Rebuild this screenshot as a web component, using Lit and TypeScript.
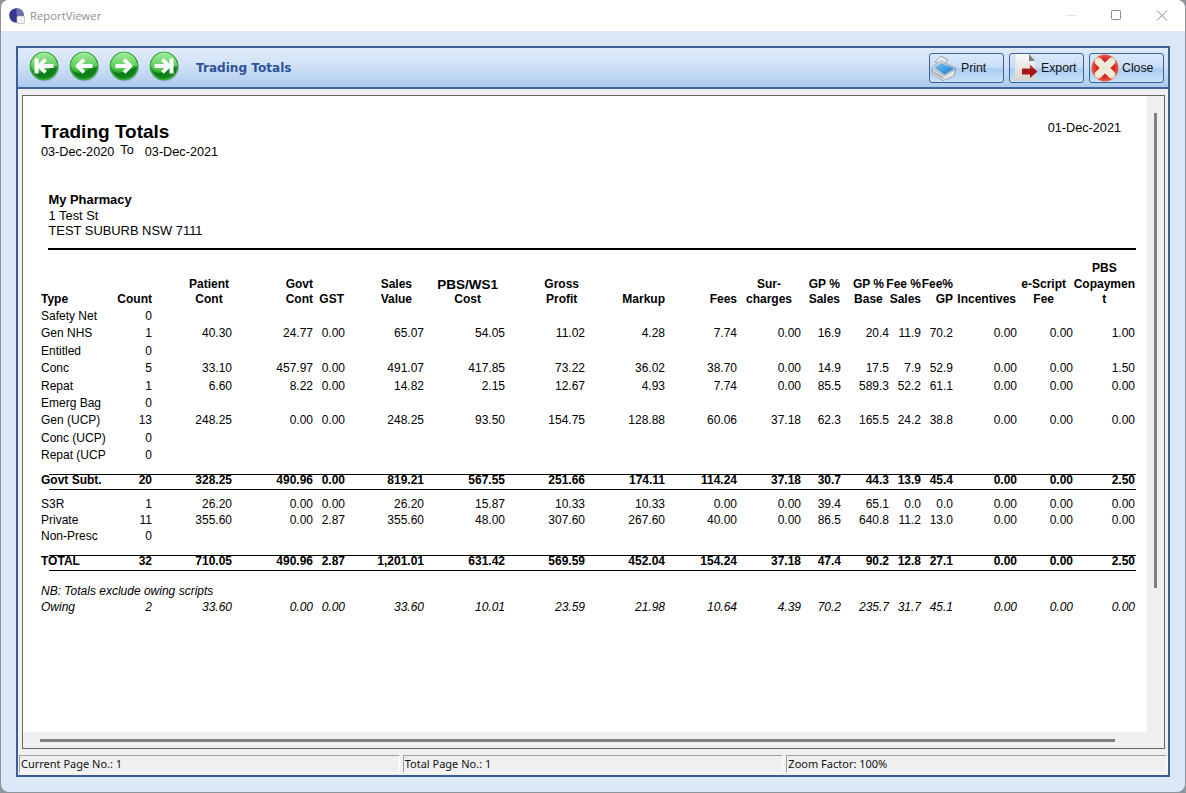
import { LitElement, html, css, svg } from "lit";
import { customElement } from "lit/decorators.js";

interface Head { lines: string[]; mr: number; align?: string }
const COLS = [70, 41, 80, 81, 32, 79, 81, 80, 80, 72, 64, 40, 48, 32, 32, 64, 56, 62];
const HEADS: Head[] = [
  { lines: ["Type"], mr: 0, align: "left" },
  { lines: ["Count"], mr: 0 },
  { lines: ["Patient", "Cont"], mr: 3, align: "center" },
  { lines: ["Govt", "Cont"], mr: 0 },
  { lines: ["GST"], mr: 1 },
  { lines: ["Sales", "Value"], mr: 12, align: "center" },
  { lines: ["PBS/WS1", "Cost"], mr: 7, align: "center" },
  { lines: ["Gross", "Profit"], mr: 6, align: "center" },
  { lines: ["Markup"], mr: 0 },
  { lines: ["Fees"], mr: 0 },
  { lines: ["Sur-", "charges"], mr: 9, align: "center" },
  { lines: ["GP %", "Sales"], mr: 1, align: "center" },
  { lines: ["GP %", "Base"], mr: 5, align: "center" },
  { lines: ["Fee %", "Sales"], mr: 0 },
  { lines: ["Fee%", "GP"], mr: 0 },
  { lines: ["Incentives"], mr: 1 },
  { lines: ["e-Script", "Fee"], mr: 7, align: "center" },
  { lines: ["PBS", "Copaymen", "t"], mr: 0, align: "center" },
];
const row = (s: string) => s.split("|");
const GROUP_A = [
  "Safety Net|0",
  "Gen NHS|1|40.30|24.77|0.00|65.07|54.05|11.02|4.28|7.74|0.00|16.9|20.4|11.9|70.2|0.00|0.00|1.00",
  "Entitled|0",
  "Conc|5|33.10|457.97|0.00|491.07|417.85|73.22|36.02|38.70|0.00|14.9|17.5|7.9|52.9|0.00|0.00|1.50",
  "Repat|1|6.60|8.22|0.00|14.82|2.15|12.67|4.93|7.74|0.00|85.5|589.3|52.2|61.1|0.00|0.00|0.00",
  "Emerg Bag|0",
  "Gen (UCP)|13|248.25|0.00|0.00|248.25|93.50|154.75|128.88|60.06|37.18|62.3|165.5|24.2|38.8|0.00|0.00|0.00",
  "Conc (UCP)|0",
  "Repat (UCP|0",
].map(row);
const SUBT = row("Govt Subt.|20|328.25|490.96|0.00|819.21|567.55|251.66|174.11|114.24|37.18|30.7|44.3|13.9|45.4|0.00|0.00|2.50");
const GROUP_B = [
  "S3R|1|26.20|0.00|0.00|26.20|15.87|10.33|10.33|0.00|0.00|39.4|65.1|0.0|0.0|0.00|0.00|0.00",
  "Private|11|355.60|0.00|2.87|355.60|48.00|307.60|267.60|40.00|0.00|86.5|640.8|11.2|13.0|0.00|0.00|0.00",
  "Non-Presc|0",
].map(row);
const TOTAL = row("TOTAL|32|710.05|490.96|2.87|1,201.01|631.42|569.59|452.04|154.24|37.18|47.4|90.2|12.8|27.1|0.00|0.00|2.50");
const OWING = row("Owing|2|33.60|0.00|0.00|33.60|10.01|23.59|21.98|10.64|4.39|70.2|235.7|31.7|45.1|0.00|0.00|0.00");
const GRID = COLS.map((c) => c + "px").join(" ");

const navIcon = (id: string, arrow: unknown) => html`<svg class="nav" width="32" height="32" viewBox="0 0 32 32">
  <defs>
    <linearGradient id="g${id}" x1="0" y1="0" x2="0" y2="1">
      <stop offset="0" stop-color="#3fbb3a"/><stop offset=".5" stop-color="#2aa82a"/><stop offset="1" stop-color="#45c040"/>
    </linearGradient>
    <linearGradient id="h${id}" x1="0" y1="0" x2="0" y2="1">
      <stop offset="0" stop-color="#a5eb9e"/><stop offset="1" stop-color="#4cc546"/>
    </linearGradient>
    <linearGradient id="d${id}" x1="0" y1="0" x2="1" y2="1">
      <stop offset="0" stop-color="#0a6d12"/><stop offset=".7" stop-color="#0f8318"/><stop offset="1" stop-color="#35b232"/>
    </linearGradient>
  </defs>
  <circle cx="16.500" cy="17" r="14.400" fill="#5f7f8f" opacity=".3"/>
  <circle cx="16" cy="16" r="14" fill="url(#g${id})" stroke="#1c8a20" stroke-width=".7"/>
  <path d="M2.600 16.500C2.600 9 8.500 2.500 16 2.500S29.400 9 29.400 16.500C25 14.500 21 18 15 20 10 21.500 5 20 2.600 16.500Z" fill="url(#h${id})"/>
  <path d="M3.800 20C7 23 11 23.500 16 21.500S25 17 29 18C28 24.500 22.500 28.800 16 28.800 10.500 28.800 6 25 3.800 20Z" fill="url(#d${id})"/>
  <g fill="none" stroke="#fff" stroke-width="3.800" stroke-linejoin="round">${arrow}</g>
</svg>`;
const arrFirst = svg`<path d="M8.500 8.500v15" stroke-width="4"/><path d="M17.500 9.500L11 16l6.500 6.500M12 16h13.500"/>`;
const arrPrev = svg`<path d="M16 9.500L9.500 16l6.500 6.500M10.500 16h14"/>`;
const arrNext = svg`<path d="M16 9.500l6.500 6.500-6.500 6.500M21.500 16h-14"/>`;
const arrLast = svg`<path d="M23.500 8.500v15" stroke-width="4"/><path d="M14.500 9.500L21 16l-6.500 6.500M20 16H6.500"/>`;

const printIcon = html`<svg width="26" height="26" viewBox="0 0 26 26">
  <defs>
    <linearGradient id="pb" x1="0" y1="0" x2="1" y2="1"><stop offset="0" stop-color="#eceef1"/><stop offset="1" stop-color="#9aa3ae"/></linearGradient>
    <linearGradient id="pt" x1="0" y1="0" x2="1" y2="1"><stop offset="0" stop-color="#7fc8f5"/><stop offset="1" stop-color="#1477cf"/></linearGradient>
  </defs>
  <path d="M4 7L10 1l7 4-5 5z" fill="#e9ebee" stroke="#858e99" stroke-width=".8"/>
  <path d="M1 12L10 6l15 7-2 8-11 4.500L2 20z" fill="url(#pb)" stroke="#7f8995" stroke-width=".6"/>
  <path d="M3 12.500L10.500 8 23 13.500 13.500 19.500z" fill="url(#pt)"/>
  <path d="M2 14.500l11.500 6.500 10.500-6.500-1 6.500L12 25.500 2 20z" fill="#e4e7ea" stroke="#8a94a0" stroke-width=".5"/>
  <path d="M3 16.500l9.500 5.500v2.500L3 19z" fill="#aab2bc"/>
</svg>`;
const exportIcon = html`<svg width="26" height="30" viewBox="0 0 26 30">
  <defs><linearGradient id="pe" x1="0" y1="0" x2="0" y2="1"><stop offset="0" stop-color="#fbfbfb"/><stop offset="1" stop-color="#d4d3cc"/></linearGradient></defs>
  <path d="M4 1h13l6 7v20H2z" fill="url(#pe)"/>
  <path d="M17 1l6 7h-6z" fill="#7f7f7f"/>
  <path d="M10 16h8v-4l7.500 6.500L18 25v-3.500h-8z" fill="#a8151b"/>
  <path d="M10 16h8v-4l4 3.400H10z" fill="#c9252b"/>
</svg>`;
const closeIcon = html`<svg width="28" height="28" viewBox="0 0 28 28">
  <defs><radialGradient id="rc" cx="50%" cy="50%" r="55%"><stop offset="0" stop-color="#b01818"/><stop offset=".6" stop-color="#d92a22"/><stop offset="1" stop-color="#ee6a4e"/></radialGradient></defs>
  <circle cx="14" cy="14" r="13.400" fill="url(#rc)"/>
  <path d="M7.500 7.500l13 13M20.500 7.500l-13 13" stroke="#f0ebd8" stroke-width="7.500" stroke-linecap="round" fill="none"/>
</svg>`;

@customElement("app-root")
export class AppRoot extends LitElement {
  static styles = css`
    :host { display: block; width: 1186px; height: 793px; background: #8d949c; font-family: "Liberation Sans", Arial, sans-serif; overflow: hidden; }
    .win { height: 792px; width: 1184px; margin-left: 1px; display: flex; flex-direction: column; border-radius: 8px; overflow: hidden; background: #dce7f7; }
    .title { height: 31px; flex: none; background: #fff; display: flex; align-items: center; padding-left: 8px; color: #8f8f8f; font: 11.300px "Open Sans", sans-serif; }
    .title .name { margin-left: 5px; }
    .wc { margin-left: auto; display: flex; align-items: center; }
    .wc svg { display: block; }
    .body { flex: 1; min-height: 0; padding: 15px; display: flex; }
    .frame { flex: 1; border: 2px solid #3c6096; display: flex; flex-direction: column; background: #f0f0f0; min-width: 0; }
    .bar { height: 41px; flex: none; box-sizing: border-box; border-bottom: 2px solid #3f659c; background: linear-gradient(#dfeafb 0%, #d6e4f8 35%, #adcbed 100%); display: flex; align-items: center; padding: 0 4px 0 10px; }
    .nav { display: block; margin: 0 8px 3px 0; }
    .bar .nav:nth-child(4) { margin-right: 0; }
    .heading { margin-left: 16px; font: bold 12.100px "DejaVu Sans", sans-serif; color: #2e5399; }
    .btns { margin-left: auto; display: flex; gap: 5px; }
    .btn { width: 75px; height: 30px; box-sizing: border-box; border: 1px solid #3d6496; border-radius: 3px; background: linear-gradient(#dbe9fb 0%, #c9def7 45%, #a9cdf3 55%, #cbe2fb 100%); display: flex; align-items: center; font-size: 12.300px; color: #111; padding-left: 1px; gap: 4px; }
    .btn.e { padding-left: 2px; gap: 3px; }
    .btn.x { padding-left: 1px; gap: 3px; }
    .main { flex: 1; min-height: 0; padding: 6px 3px 6px 4px; display: flex; }
    .report { flex: 1; border: 1px solid #666; display: flex; flex-direction: column; min-width: 0; }
    .upper { flex: 1; display: flex; min-height: 0; }
    .page { flex: 1; background: #fff; padding: 0 11px 0 18px; box-sizing: border-box; color: #000; font-size: 12px; min-width: 0; overflow: hidden; }
    .vs { width: 17px; flex: none; display: flex; justify-content: center; padding-top: 17px; box-sizing: border-box; }
    .vs i { display: block; width: 3px; height: 475px; background: #808080; }
    .hs { height: 16px; flex: none; display: flex; align-items: center; padding-left: 17px; }
    .hs i { display: block; width: 1075px; height: 3px; background: #808080; }
    .head { display: flex; justify-content: space-between; padding-top: 25px; font-size: 12.700px; }
    h1 { margin: 0; font-size: 19px; font-weight: bold; line-height: 22px; }
    .range { display: flex; line-height: 15px; margin-top: 2px; }
    .range .to { margin: -2px 11px 0 6px; }
    .date { margin: 0 15px 0 0; line-height: 15px; }
    .addr { margin: 32px 0 0 7.500px; line-height: 15.500px; font-size: 12.900px; }
    .addr b { display: block; }
    .rule { height: 2px; background: #000; margin: 9px 0 11px 7px; }
    .grid { display: grid; position: relative; }
    .hrow { height: 47px; margin-bottom: .5px; align-items: end; font-weight: bold; }
    .hc { display: flex; justify-content: flex-end; min-width: 0; line-height: 15.500px; }
    .hc.left { justify-content: flex-start; }
    .hc span { white-space: nowrap; display: block; }
    .hc span div.big { font-size: 13.500px; }
    .a { height: 17.400px; line-height: 17.400px; }
    .s { height: 16px; line-height: 16px; }
    .c { text-align: right; white-space: nowrap; min-width: 0; }
    .c:first-child { text-align: left; }
    .tot { font-weight: bold; }
    .tot::before, .tot::after { content: ""; position: absolute; left: 8px; right: 0; height: 1.500px; background: #000; }
    .tot::before { top: 2px; }
    .tot::after { top: 17px; }
    .m8 { margin-top: 7.300px; }
    .m9 { margin-top: 8px; }
    .m10 { margin-top: 9px; }
    .nb { margin-top: 14px; height: 16px; line-height: 16px; font-style: italic; }
    .it { font-style: italic; }
    .status { height: 20px; flex: none; display: flex; box-sizing: border-box; padding: 0 1px 2px; gap: 3px; font: 11px "Noto Sans", sans-serif; color: #111; }
    .status div { flex: 1; border: 1px solid; border-color: #a0a0a0 #fff #fff #a0a0a0; padding-left: 1px; line-height: 16px; white-space: nowrap; overflow: hidden; }
  `;

  private cells(r: string[]) {
    return COLS.map((_, i) => html`<div class="c">${r[i] ?? ""}</div>`);
  }
  private row(r: string[], cls: string) {
    return html`<div class="grid ${cls}" style="grid-template-columns:${GRID}">${this.cells(r)}</div>`;
  }

  render() {
    return html`<div class="win">
      <div class="title">
        <svg width="16" height="16" viewBox="0 0 16 16">
          <circle cx="7.500" cy="7.500" r="7.300" fill="#343a8e"/>
          <path d="M7.500.2a7.300 7.300 0 0 1 7.300 7.300H7.500z" fill="#6f72b0"/>
          <rect x="8" y="8" width="7.500" height="7.500" rx="1" fill="#f2f2f2" stroke="#b5b5b5" stroke-width=".7"/>
        </svg>
        <span class="name">ReportViewer</span>
        <div class="wc">
          <svg width="120" height="31" viewBox="0 0 120 31">
            <path d="M1 15.500h10" stroke="#e4e4e4"/>
            <rect x="46.500" y="10.500" width="9" height="9" rx="1" fill="none" stroke="#8a8a8a"/>
            <path d="M92 10.500l10 10M102 10.500l-10 10" stroke="#8a8a8a" fill="none"/>
          </svg>
        </div>
      </div>
      <div class="body">
        <div class="frame">
          <div class="bar">
            ${navIcon("a", arrFirst)}${navIcon("b", arrPrev)}${navIcon("c", arrNext)}${navIcon("d", arrLast)}
            <div class="heading">Trading Totals</div>
            <div class="btns">
              <div class="btn">${printIcon}<span>Print</span></div>
              <div class="btn e">${exportIcon}<span>Export</span></div>
              <div class="btn x">${closeIcon}<span>Close</span></div>
            </div>
          </div>
          <div class="main">
            <div class="report">
              <div class="upper">
                <div class="page">
                  <div class="head">
                    <div>
                      <h1>Trading Totals</h1>
                      <div class="range"><span>03-Dec-2020</span><span class="to">To</span><span>03-Dec-2021</span></div>
                    </div>
                    <div class="date">01-Dec-2021</div>
                  </div>
                  <div class="addr"><b>My Pharmacy</b>1 Test St<br />TEST SUBURB NSW 7111</div>
                  <div class="rule"></div>
                  <div class="grid hrow" style="grid-template-columns:${GRID}">
                    ${HEADS.map((h) => html`<div class="hc ${h.align === "left" ? "left" : ""}"><span style="margin-right:${h.mr}px;text-align:${h.align ?? "right"}">${h.lines.map((l) => html`<div class=${l === "PBS/WS1" ? "big" : ""}>${l}</div>`)}</span></div>`)}
                  </div>
                  ${GROUP_A.map((r) => this.row(r, "a"))}
                  ${this.row(SUBT, "s tot m8")}
                  ${GROUP_B.map((r, i) => this.row(r, i === 0 ? "s m9" : "s"))}
                  ${this.row(TOTAL, "s tot m10")}
                  <div class="nb">NB: Totals exclude owing scripts</div>
                  ${this.row(OWING, "s it")}
                </div>
                <div class="vs"><i></i></div>
              </div>
              <div class="hs"><i></i></div>
            </div>
          </div>
          <div class="status">
            <div>Current Page No.: 1</div>
            <div>Total Page No.: 1</div>
            <div>Zoom Factor: 100%</div>
          </div>
        </div>
      </div>
    </div>`;
  }
}
